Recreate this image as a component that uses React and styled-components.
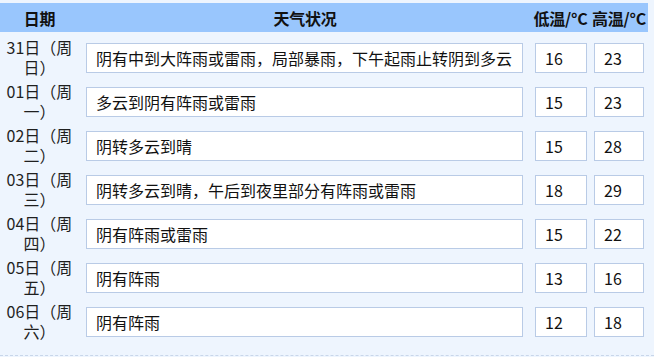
import React from "react";
import styled, { createGlobalStyle } from "styled-components";

const Global = createGlobalStyle`
  html, body {
    margin: 0;
    padding: 0;
    background: #eef5fe;
  }
  body {
    font-family: "Noto Sans CJK SC", "Noto Sans", sans-serif;
    font-size: 16px;
    color: #1a1a1a;
  }
`;

const Wrap = styled.div`
  width: 654px;
  padding-top: 3px;
  padding-bottom: 12px;
  border-bottom: 1px dashed #c8d6ea;
`;

const Grid = styled.div`
  display: grid;
  grid-template-columns: 79px 452px 59px 58px;
  width: 648px;
`;

const HeaderRow = styled(Grid)`
  height: 29px;
  background: #99c6fd;
  margin-bottom: 3px;
`;

const HeadCell = styled.div`
  display: flex;
  align-items: center;
  justify-content: center;
  font-weight: bold;
  font-size: 16px;
  color: #111;
  white-space: nowrap;
  letter-spacing: -0.2px;
`;

const Row = styled(Grid)`
  height: 44px;
`;

const DateCell = styled.div`
  display: flex;
  align-items: center;
  justify-content: center;
  text-align: center;
  line-height: 20px;
  padding: 0 4px;
  color: #1f1f1f;
`;

const Field = styled.input`
  box-sizing: border-box;
  height: 30px;
  margin-top: 8px;
  margin-left: ${(p) => p.$ml}px;
  width: ${(p) => p.$w}px;
  border: 1px solid #b9cbe6;
  background: #fff;
  font-family: inherit;
  font-size: 16px;
  color: #111;
  padding: 0 0 0 9px;
  outline: none;
  border-radius: 0;
`;

const data = [
  ["31", "日", "阴有中到大阵雨或雷雨，局部暴雨，下午起雨止转阴到多云", "16", "23"],
  ["01", "一", "多云到阴有阵雨或雷雨", "15", "23"],
  ["02", "二", "阴转多云到晴", "15", "28"],
  ["03", "三", "阴转多云到晴，午后到夜里部分有阵雨或雷雨", "18", "29"],
  ["04", "四", "阴有阵雨或雷雨", "15", "22"],
  ["05", "五", "阴有阵雨", "13", "16"],
  ["06", "六", "阴有阵雨", "12", "18"],
];

export default function App() {
  return (
    <>
      <Global />
      <Wrap>
        <HeaderRow>
          <HeadCell>日期</HeadCell>
          <HeadCell>天气状况</HeadCell>
          <HeadCell>低温/°C</HeadCell>
          <HeadCell>高温/°C</HeadCell>
        </HeaderRow>
        {data.map(([d, w, text, lo, hi]) => (
          <Row key={d}>
            <DateCell>{`${d}日（周${w}）`}</DateCell>
            <Field $ml={7} $w={437} defaultValue={text} readOnly />
            <Field $ml={4} $w={52} defaultValue={lo} readOnly />
            <Field $ml={4} $w={50} defaultValue={hi} readOnly />
          </Row>
        ))}
      </Wrap>
    </>
  );
}
